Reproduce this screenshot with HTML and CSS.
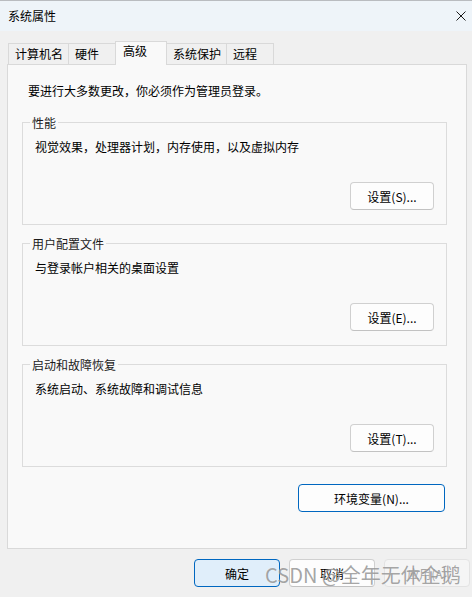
FILE: index.html
```html
<!DOCTYPE html>
<html lang="zh-CN">
<head>
<meta charset="utf-8">
<title>系统属性</title>
<link rel="stylesheet" href="styles.css">
</head>
<body>
<div class="window">
  <header class="titlebar">
    <span class="title">系统属性</span>
    <svg class="close" width="10" height="10" viewBox="0 0 10 10" aria-hidden="true">
      <path d="M0.5 0.5 L9.5 9.5 M9.5 0.5 L0.5 9.5" stroke="#1a1a1a" stroke-width="1" fill="none"/>
    </svg>
  </header>
  <div class="client">
    <nav class="tabs">
      <div class="tab tab-wide">计算机名</div>
      <div class="tab">硬件</div>
      <div class="tab tab-active">高级</div>
      <div class="tab tab-wide">系统保护</div>
      <div class="tab">远程</div>
    </nav>
    <main class="panel">
      <p class="note">要进行大多数更改，你必须作为管理员登录。</p>

      <section class="group">
        <h2 class="group-title">性能</h2>
        <p class="group-text">视觉效果，处理器计划，内存使用，以及虚拟内存</p>
        <div class="group-actions"><button class="btn btn-settings">设置(S)...</button></div>
      </section>

      <section class="group">
        <h2 class="group-title">用户配置文件</h2>
        <p class="group-text">与登录帐户相关的桌面设置</p>
        <div class="group-actions"><button class="btn btn-settings">设置(E)...</button></div>
      </section>

      <section class="group group-last">
        <h2 class="group-title">启动和故障恢复</h2>
        <p class="group-text">系统启动、系统故障和调试信息</p>
        <div class="group-actions"><button class="btn btn-settings">设置(T)...</button></div>
      </section>

      <div class="env-row"><button class="btn btn-accent-outline btn-env">环境变量(N)...</button></div>
    </main>
    <footer class="footer">
      <button class="btn btn-default">确定</button>
      <button class="btn btn-dialog">取消</button>
      <button class="btn btn-dialog btn-disabled">应用(A)</button>
    </footer>
  </div>
  <div class="watermark">CSDN @全年无休企鹅</div>
</div>
</body>
</html>
```

FILE: styles.css
```css
* {
  box-sizing: border-box;
}

html, body {
  margin: 0;
  padding: 0;
  background: #f0f0f0;
}

body {
  font-family: "Noto Sans CJK SC", "Microsoft YaHei UI", "Noto Sans", sans-serif;
  font-size: 12px;
  color: #000;
}

.window {
  position: relative;
  width: 472px;
  height: 597px;
  overflow: hidden;
  background: #f0f0f0;
}

.titlebar {
  height: 31px;
  border-top: 1px solid #b9bcc0;
  background: #eef4f9;
  display: flex;
  align-items: center;
  justify-content: space-between;
  padding: 0 6px 0 8px;
}

.title {
  font-size: 12px;
  line-height: 16px;
  color: #000;
}

.close {
  display: block;
}

.client {
  padding: 10px 2px 0 7px;
}

/* tabs */
.tabs {
  position: relative;
  z-index: 1;
  display: flex;
  align-items: flex-end;
  padding-left: 1px;
}

.tab {
  min-width: 48px;
  height: 21px;
  margin-left: -1px;
  padding: 0 5px 0 6px;
  border: 1px solid #d9d9d9;
  border-bottom: none;
  background: #f0f0f0;
  line-height: 20px;
  white-space: nowrap;
}

.tab:first-child {
  margin-left: 0;
}

.tab-wide {
  min-width: 59px;
}

.tab-active {
  position: relative;
  z-index: 2;
  min-width: 52px;
  height: 24px;
  margin-bottom: -1px;
  padding: 0 5px 5px 7px;
  line-height: 18px;
  background: #f9f9f9;
}

/* main panel */
.panel {
  margin: 0 3px 0 0;
  padding: 18px 19px 36px 0;
  border: 1px solid #d9d9d9;
  background: #f9f9f9;
}

.note {
  margin: 0 0 23px 20px;
  line-height: 16px;
}

.group {
  margin: 0 0 18px 14px;
  padding: 0 12px 14px 12px;
  border: 1px solid #dcdcdc;
}

.group-last {
  margin-bottom: 17px;
}

/* caption sits on top of the group's top border */
.group-title {
  width: fit-content;
  margin: -9px 0 0 -5px;
  padding: 0 2px;
  font-size: 12px;
  font-weight: normal;
  line-height: 17px;
  color: #1b1b1b;
  background: #f9f9f9;
}

.group-text {
  margin: 8px 0 0 0;
  line-height: 16px;
}

.group-actions {
  display: flex;
  justify-content: flex-end;
  margin-top: 27px;
}

/* buttons */
.btn {
  display: flex;
  align-items: center;
  justify-content: center;
  height: 28px;
  padding: 0;
  font: inherit;
  color: #000;
  background: #fdfdfd;
  border: 1px solid #d0d0d0;
  border-bottom-color: #c2c2c2;
  border-radius: 4px;
}

.btn-settings {
  width: 84px;
}

.env-row {
  display: flex;
  justify-content: flex-end;
  margin-right: 2px;
}

.btn-accent-outline {
  border: 1px solid #0067c0;
}

.btn-env {
  width: 147px;
}

.footer {
  display: flex;
  justify-content: flex-end;
  gap: 9px;
  margin-top: 10px;
}

.btn-dialog,
.btn-default {
  width: 86px;
}

.btn-default {
  background: #e0eefa;
  border: 1px solid #0067c0;
}

.btn-disabled {
  background: #f5f5f5;
  border-color: #e3e3e3;
  color: #a3a3a3;
}

/* watermark overlay */
.watermark {
  position: absolute;
  left: 265px;
  top: 562px;
  font-size: 20px;
  line-height: 26px;
  color: rgba(120, 120, 120, 0.68);
  text-shadow: 0 0 1px rgba(255, 255, 255, 0.7);
  white-space: nowrap;
  pointer-events: none;
}
```
